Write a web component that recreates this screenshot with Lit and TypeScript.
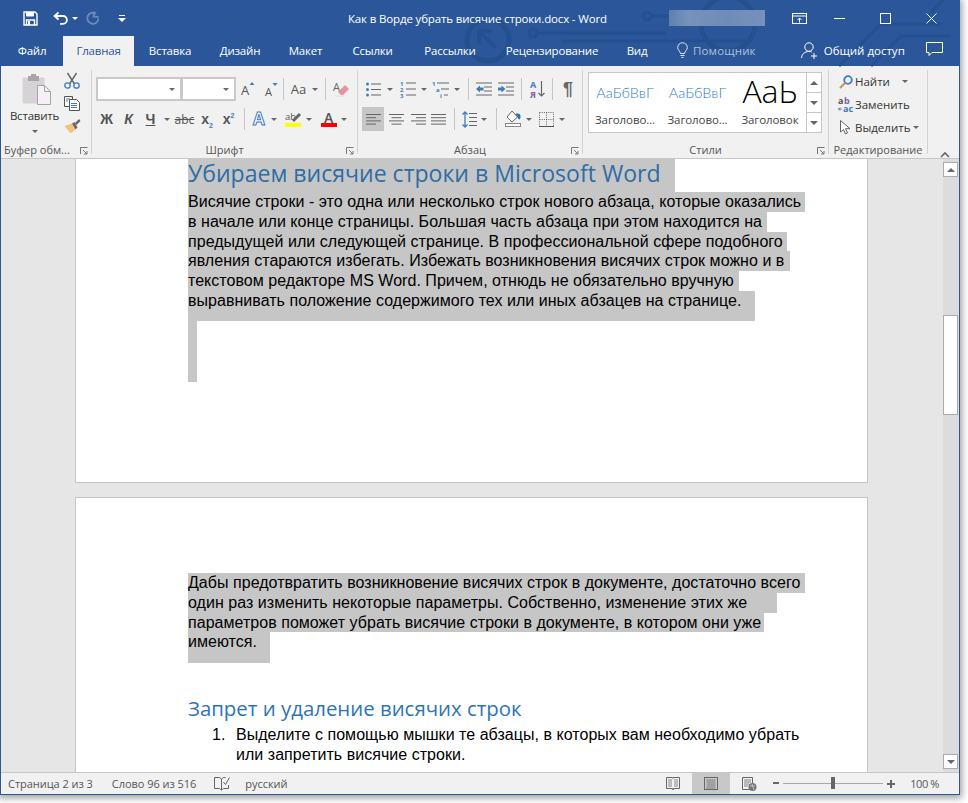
import { LitElement, html, css, svg } from "lit";
import { customElement } from "lit/decorators.js";

const cell = (w: number, t: unknown = "") => html`<span class="cell" style="width:${w}px">${t}</span>`;
const gap = (w: number) => html`<span class="cell" style="width:${w}px"></span>`;
const caret = html`<i class="caret"></i>`;
const sep = html`<i class="sep"></i>`;
const launcher = html`<svg class="launch" width="8" height="8" viewBox="0 0 8 8"><path d="M.5 7V.5H7.500M3 3l4 4M7 4v3H4" fill="none" stroke="#777"/></svg>`;
const ic = (w: number, h: number, body: unknown) =>
  html`<svg width="${w}" height="${h}" viewBox="0 0 ${w} ${h}" fill="none">${body}</svg>`;

const B = "#3f7cbf";

const icons = {
  save: ic(15, 15, svg`<path d="M1 1h11l2 2v11H1z" stroke="#fff" stroke-width="1.4"/><path d="M3.500 1v4h7V1" fill="#fff" stroke="#fff"/><path d="M3.500 14V9h8v5" stroke="#fff" stroke-width="1.400"/><rect x="5" y="10" width="2" height="4" fill="#fff"/>`),
  undo: ic(16, 14, svg`<path d="M5.500 1.500L1.500 5l4 3.500" stroke="#fff" stroke-width="1.800"/><path d="M2 5h8a3.800 3.800 0 0 1 0 7.800H7" stroke="#fff" stroke-width="1.800"/>`),
  redo: ic(14, 14, svg`<path d="M8 .5v5h5" stroke="#6d8cba" stroke-width="1.800" transform="rotate(8 8 3)"/><path d="M10 2.500a5.600 5.600 0 1 0 2.500 5" stroke="#6d8cba" stroke-width="1.800"/>`),
  qat: ic(8, 7, svg`<path d="M1 .5h6" stroke="#fff"/><path d="M0 3h8L4 7z" fill="#fff"/>`),
  display: ic(15, 11, svg`<rect x=".5" y=".5" width="14" height="10" stroke="#fff"/><path d="M.5 3h14" stroke="#fff"/><path d="M7.500 9.500V5M5.500 7l2-2 2 2" stroke="#fff"/>`),
  min: ic(11, 11, svg`<path d="M0 5.500h11" stroke="#fff"/>`),
  max: ic(11, 11, svg`<rect x=".5" y=".5" width="10" height="10" stroke="#fff"/>`),
  close: ic(11, 11, svg`<path d="M.5.500l10 10M10.500.500l-10 10" stroke="#fff"/>`),
  bulb: ic(11, 15, svg`<path d="M3.500 10.500C3 8 .7 7 .7 4.500a4.800 4.800 0 0 1 9.600 0c0 2.500-2.300 3.500-2.800 6z" stroke="#dfe6f0"/><path d="M3.500 12.500h4M4.500 14.500h2" stroke="#dfe6f0"/>`),
  user: ic(17, 17, svg`<circle cx="8" cy="5" r="4.200" stroke="#fff"/><path d="M.5 16c.5-4 3-6.500 7.500-6.500 1 0 2 .2 2.800.5" stroke="#fff"/><path d="M13 11v6M10 14h6" stroke="#fff"/>`),
  comment: ic(17, 15, svg`<path d="M.5.500h16v10H6l-3 3v-3H.5z" stroke="#fff"/>`),
  paste: ic(29, 31, svg`<path d="M1 4h21v25H1z" fill="#d6d3d6" stroke="#d6d3d6"/><rect x="6" y="2" width="11" height="5" fill="#a9a6a9"/><rect x="9" y="0" width="5" height="4" fill="#a9a6a9"/><path d="M15.500 11.500h7l6 6v13h-13z" fill="#f4f0f6" stroke="#a5a3a5"/><path d="M22.500 11.500v6h6" stroke="#a5a3a5"/>`),
  scissors: ic(16, 17, svg`<path d="M3.500 1l7 11M12.500 1l-7 11" stroke="#6b6b6b" stroke-width="1.500"/><circle cx="3.500" cy="13.500" r="2.700" stroke="${B}" stroke-width="1.300"/><circle cx="12.500" cy="13.500" r="2.700" stroke="${B}" stroke-width="1.300"/>`),
  copy: ic(16, 15, svg`<path d="M.5.500h8v10h-8z" fill="#fff" stroke="#555"/><path d="M5.500 3.500h7l3 3v8h-10z" fill="#fff" stroke="#555"/><path d="M7 7.500h6M7 9.500h6M7 11.500h6" stroke="${B}"/><path d="M2 3h4M2 5h2" stroke="${B}"/>`),
  brush: ic(17, 16, svg`<path d="M.5 8l6 7.500 5-4-3.500-6z" fill="#efc27e"/><path d="M8 5.500l3.500 6 2-2-3-5.500z" fill="#666"/><path d="M11 5l4-4 1.500 2-4 4z" fill="#666"/>`),
  grow: ic(14, 14, svg`<text x="0" y="13" font-family="Open Sans" font-size="13" fill="#555">A</text><path d="M8.500 3L11 0l2.500 3z" fill="${B}"/>`),
  shrink: ic(13, 13, svg`<text x="0" y="12.500" font-family="Open Sans" font-size="11" fill="#555">A</text><path d="M7.500 0h5L10 3z" fill="${B}"/>`),
  eraser: ic(16, 16, svg`<text x="0" y="10" font-family="Open Sans" font-size="11" fill="#666">A</text><path d="M5 11l7-7 4 4-6 6H8z" fill="#ec8f9c"/><path d="M2 15h9" stroke="#ddd"/>`),
  effect: ic(15, 16, svg`<text x="0" y="14" font-family="Open Sans" font-weight="700" font-size="17" fill="#fff" stroke="${B}" stroke-width="1">A</text>`),
  hilite: ic(16, 16, svg`<text x="0" y="9" font-family="Open Sans" font-size="9.500" fill="#555">ab</text><path d="M8 10l7-7" stroke="#666" stroke-width="3"/><rect y="12" width="16" height="4" fill="#ff0"/>`),
  color: ic(16, 16, svg`<text x="3" y="12" font-family="Open Sans" font-weight="600" font-size="14" fill="#555">A</text><rect y="12" width="16" height="4" fill="#f00"/>`),
  bullets: ic(15, 15, svg`<path d="M5 2h10M5 7.500h10M5 13h10" stroke="#666"/><circle cx="1.500" cy="2" r="1.500" fill="${B}"/><circle cx="1.500" cy="7.500" r="1.500" fill="${B}"/><circle cx="1.500" cy="13" r="1.500" fill="${B}"/>`),
  numbers: ic(16, 16, svg`<path d="M6 2h10M6 8h10M6 14h10" stroke="#666"/><text x="0" y="5" font-family="Open Sans" font-weight="700" font-size="6" fill="${B}">1</text><text x="0" y="11" font-family="Open Sans" font-weight="700" font-size="6" fill="${B}">2</text><text x="0" y="16.500" font-family="Open Sans" font-weight="700" font-size="6" fill="${B}">3</text>`),
  multi: ic(17, 16, svg`<path d="M5 2h12M9 8h8M12 14h4" stroke="#666"/><text x="0" y="5" font-family="Open Sans" font-weight="700" font-size="6" fill="${B}">1</text><text x="4" y="11" font-family="Open Sans" font-weight="700" font-size="6" fill="${B}">a</text><text x="8" y="16.500" font-family="Open Sans" font-weight="700" font-size="6" fill="${B}">i</text>`),
  outdent: ic(16, 14, svg`<path d="M0 1h16M8 5h8M8 9h8M0 13h16" stroke="#666"/><path d="M0 7l4-3.500V5.500h3.500v3H4v2z" fill="${B}"/>`),
  indent: ic(16, 14, svg`<path d="M0 1h16M8 5h8M8 9h8M0 13h16" stroke="#666"/><path d="M7.500 7L3.500 3.500V5.500H0v3h3.500v2z" fill="${B}"/>`),
  sort: ic(15, 18, svg`<text x="0" y="8" font-family="Open Sans" font-weight="700" font-size="9" fill="${B}">А</text><text x="0" y="17.500" font-family="Open Sans" font-weight="700" font-size="9" fill="#8a5aa8">Я</text><path d="M11.500 1v15M8.500 13l3 3 3-3" stroke="#666" stroke-width="1.200"/>`),
  left: ic(15, 11, svg`<path d="M0 .5h15M0 3.700h10M0 6.900h15M0 10.100h10" stroke="#666"/>`),
  center: ic(15, 11, svg`<path d="M0 .5h15M2.500 3.700h10M0 6.900h15M2.500 10.100h10" stroke="#666"/>`),
  right: ic(15, 11, svg`<path d="M0 .5h15M5 3.700h10M0 6.900h15M5 10.100h10" stroke="#666"/>`),
  justify: ic(15, 11, svg`<path d="M0 .5h15M0 3.700h15M0 6.900h15M0 10.100h15" stroke="#666"/>`),
  spacing: ic(15, 17, svg`<path d="M7 3h8M7 7h8M7 11h8M7 15h8" stroke="#666" transform="translate(0 -.5)"/><path d="M3 1v15M.5 3.500L3 1l2.500 2.500M.5 13.500L3 16l2.500-2.500" stroke="${B}" stroke-width="1.300"/>`),
  shade: ic(17, 18, svg`<path d="M2 7l5-6 5.500 6-5.500 5z" fill="#fff" stroke="#666"/><path d="M10.500 4c3-1 5 0 5 2.500S14.500 10 13.500 9z" fill="#2f6ead"/><rect x=".5" y="13.500" width="15" height="3" fill="#fff" stroke="#888"/>`),
  borders: ic(15, 15, svg`<path d="M.5.500h14v14M.5.500v14M.5 7.500h14M7.500.500v14" stroke="#555" stroke-width=".9" stroke-dasharray="1 1.200"/><path d="M0 14.500h15" stroke="#555"/>`),
  find: ic(14, 14, svg`<circle cx="9" cy="5" r="3.800" stroke="${B}" stroke-width="1.800"/><path d="M6 8l-5 5" stroke="#c69b4a" stroke-width="2.200"/>`),
  replace: ic(16, 17, svg`<text x="0" y="8" font-family="Open Sans" font-weight="700" font-size="9" fill="#555">a</text><text x="6" y="8" font-family="Open Sans" font-weight="700" font-size="9" fill="#8a5aa8">b</text><text x="5" y="16" font-family="Open Sans" font-weight="700" font-size="9" fill="#3b7cbb">ac</text><path d="M4 13H.5M2 11.500L.5 13 2 14.500" stroke="${B}"/>`),
  select: ic(11, 15, svg`<path d="M.5.500v11.500l3-2.500 2 4.500 2-1-2-4.300H10z" fill="#fff" stroke="#666"/>`),
  chevron: ic(10, 6, svg`<path d="M1 5l4-4 4 4" stroke="#666" stroke-width="1.600"/>`),
  proof: ic(16, 13, svg`<path d="M.5.500h5l2 1.500v11l-2-1.500h-5zM7.500 2l2-1.500h2M7.500 13l2-1.500h5V8" stroke="#666"/><path d="M9.500 5l2 2.500L15.500.5" stroke="#666"/>`),
  read: ic(14, 15, svg`<path d="M.5 1.500h6l.5 1 .5-1h6v11h-6l-.5 1.500-.5-1.500h-6z" stroke="#666"/><path d="M2 4h4M2 6h4M2 8h4M2 10h4M8 4h4M8 6h4M8 8h4M8 10h4" stroke="#888"/>`),
  print: ic(14, 13, svg`<rect x=".5" y=".5" width="13" height="12" stroke="#666"/><path d="M2.500 3h9M2.500 5h9M2.500 7h9M2.500 9h9M2.500 11h9" stroke="#666" stroke-width=".800"/>`),
  web: ic(15, 14, svg`<path d="M.5.500h10v12H.5z" stroke="#666"/><path d="M2 3h7M2 5h7M2 7h5M2 9h4" stroke="#666" stroke-width=".800"/><circle cx="10.500" cy="10" r="4" fill="#777"/><path d="M8 9h5M10 7l2 6" stroke="#ddd" stroke-width=".700"/>`),
};

const tabs: [string, number][] = [["Файл",62],["Главная",71],["Вставка",72],["Дизайн",68],["Макет",63],["Ссылки",71],["Рассылки",84],["Рецензирование",120],["Вид",50]];

const p1: [string, number][] = [
  ["Висячие строки - это одна или несколько строк нового абзаца, которые оказались",617],
  ["в начале или конце страницы. Большая часть абзаца при этом находится на",579],
  ["предыдущей или следующей странице. В профессиональной сфере подобного",599],
  ["явления стараются избегать. Избежать возникновения висячих строк можно и в",602],
  ["текстовом редакторе MS Word. Причем, отнюдь не обязательно вручную",551],
  ["выравнивать положение содержимого тех или иных абзацев на странице.",567],
];
const p2: [string, number][] = [
  ["Дабы предотвратить возникновение висячих строк в документе, достаточно всего",617],
  ["один раз изменить некоторые параметры. Собственно, изменение этих же",589],
  ["параметров поможет убрать висячие строки в документе, в котором они уже",576],
  ["имеются.",82],
];
const line = ([t, w]: [string, number], last = false) =>
  html`<div class="ln ${last ? "last" : ""}" style="width:${w}px">${t}</div>`;

@customElement("app-root")
export class AppRoot extends LitElement {
  static styles = css`
    :host { display: block; width: 968px; height: 803px; background: #fff; overflow: hidden; }
    * { box-sizing: border-box; }
    svg { overflow: visible; flex: none; }
    .win { width: 960px; height: 795px; border: 1px solid #2b579a; border-top: 0; display: flex; flex-direction: column; box-shadow: 0 1px 7px 2px rgba(0,0,0,.38); font-family: "Open Sans", sans-serif; font-size: 11px; color: #444; background: #f1f1f1; }
    .head { position: relative; background: #2b579a; height: 66px; flex: none; color: #fff; }
    .deco { position: absolute; left: 0; top: 0; pointer-events: none; }
    .titlebar { position: relative; height: 36px; display: flex; align-items: center; }
    .qat { width: 347px; padding-left: 21px; display: flex; align-items: center; flex: none; }
    .title { width: 321px; font-size: 11.500px; flex: none; letter-spacing: -.15px; white-space: nowrap; }
    .blur { width: 96px; height: 16px; flex: none; background: linear-gradient(90deg,#5f80b0,#7792bb 20%,#6f8cb8 60%,#7691bb); }
    .cell { display: inline-flex; align-items: center; justify-content: center; height: 100%; flex: none; }
    .winbtns { display: flex; margin-left: 21px; height: 100%; align-items: center; }
    .tabs { position: relative; height: 30px; display: flex; align-items: stretch; font-size: 11.500px; }
    .tab { display: flex; align-items: center; justify-content: center; flex: none; letter-spacing: -.2px; padding-bottom: 2px; }
    .tab.on { background: #f1f1f1; color: #2b579a; }
    .help { display: flex; align-items: center; gap: 5px; margin-left: 15px; color: #afc0da; padding-bottom: 2px; letter-spacing: .15px; }
    .share { display: flex; align-items: center; gap: 6px; margin-left: 45px; padding-bottom: 2px; }
    .cmt { display: flex; align-items: center; margin-left: 21px; padding-bottom: 4px; }
    .ribbon { height: 93px; flex: none; display: flex; border-bottom: 1px solid #c6c6c6; padding-top: 4px; position: relative; }
    .grp { flex: none; display: flex; flex-direction: column; border-right: 1px solid #d2d2d2; height: 84px; position: relative; }
    .body { flex: 1; min-height: 0; display: flex; }
    .stack { display: flex; flex-direction: column; padding-top: 7px; gap: 6px; }
    .row { display: flex; align-items: center; height: 24px; }
    .glabel { height: 17px; line-height: 15px; margin-bottom: -5px; text-align: center; color: #555; white-space: nowrap; flex: none; font-size: 11px; }
    .glabel.first { text-align: left; padding-left: 3px; }
    .launch { position: absolute; right: 3px; bottom: -1px; }
    .caret { display: inline-block; width: 0; height: 0; border: 3px solid transparent; border-top: 3.500px solid #666; border-bottom: 0; flex: none; }
    .caret.white { border-top-color: #fff; }
    .sep { display: inline-block; width: 1px; height: 22px; background: #c6c6c6; flex: none; }
    .paste { width: 56px; display: flex; flex-direction: column; align-items: center; padding: 4px 0 0 11px; color: #333; }
    .paste svg { margin-left: 4px; }
    .paste span { margin-top: 3px; font-size: 11.500px; letter-spacing: -.2px; white-space: nowrap; }
    .paste .caret { margin-top: 7px; }
    .small { display: flex; flex-direction: column; align-items: center; width: 30px; gap: 7px; padding-top: 2px; }
    .combo { height: 24px; background: #fff; border: 2px solid #c9c9c9; display: flex; align-items: center; justify-content: flex-end; padding-right: 5px; flex: none; }
    .b { font-weight: 700; font-size: 14px; color: #555; font-family: "Liberation Sans", sans-serif; }
    .i { font-style: italic; }
    .u { text-decoration: underline; }
    .s { text-decoration: line-through; font-size: 12px; font-family: "Open Sans", sans-serif; font-weight: 400; }
    .b sub, .b sup { font-size: 7px; color: #3f7cbf; line-height: 0; }
    .aa { font-size: 13px; color: #555; margin-right: 6px; }
    .act { background: #c6c6c6; height: 24px; }
    .gallery { margin: 2px 0 0 5px; width: 234px; height: 61px; background: #fff; border: 1px solid #c6c6c6; display: flex; flex: none; }
    .style { display: flex; flex-direction: column; align-items: center; flex: none; color: #444; }
    .st-a { height: 35px; line-height: 39px; color: #2e80c8; font-family: "Lato", "Open Sans", sans-serif; font-weight: 300; font-size: 14.500px; white-space: nowrap; }
    .st-b { height: 35px; line-height: 36px; color: #000; font-family: "Open Sans", sans-serif; font-weight: 300; font-size: 32px; white-space: nowrap; }
    .st-l { margin-top: 4px; font-size: 11.500px; white-space: nowrap; letter-spacing: -.1px; }
    .spin { margin-left: auto; width: 15px; display: flex; flex-direction: column; border-left: 1px solid #c6c6c6; }
    .spin b { flex: 1; display: flex; align-items: center; justify-content: center; border-bottom: 1px solid #c6c6c6; background: #fff; }
    .spin b:last-child { border-bottom: 0; }
    .edit { display: flex; flex-direction: column; padding: 0 0 0 7px; color: #333; font-size: 11.500px; }
    .edit div { height: 23px; flex: none; display: flex; align-items: center; white-space: nowrap; }
    .edit .ei { width: 19px; display: flex; justify-content: center; flex: none; }
    .chev { position: absolute; left: 939px; top: 80px; }
    .doc { flex: 1; min-height: 0; display: flex; overflow: hidden; }
    .canvas { flex: 1; min-width: 0; background: #e6e6e6; padding-left: 74px; overflow: hidden; font-family: "Liberation Sans", sans-serif; font-size: 16px; letter-spacing: .035px; color: #000; }
    .page { width: 793px; background: #fff; border: 1px solid #c6c6c6; padding-left: 112px; }
    .p1 { height: 324px; border-top: 0; }
    .p2 { margin-top: 14px; padding-top: 75px; height: 400px; }
    .h1 { width: 487px; height: 33px; line-height: 29px; background: #c6c6c6; color: #2e6da6; font-family: "Open Sans", sans-serif; font-weight: 400; font-size: 23.050px; letter-spacing: 0; white-space: nowrap; }
    .ln { background: #c6c6c6; height: 19.750px; line-height: 19.750px; white-space: nowrap; }
    .ln.last { height: 30.500px; }
    .gap { background: #c6c6c6; width: 9px; height: 61px; }
    .h2 { margin-top: 32px; height: 30px; line-height: 26px; color: #2e74b5; font-family: "Open Sans", sans-serif; font-weight: 400; font-size: 20.400px; letter-spacing: 0; white-space: nowrap; }
    .li { display: flex; padding-left: 24px; line-height: 19.750px; white-space: nowrap; }
    .li span { width: 24px; flex: none; }
    .sb { width: 16px; flex: none; background: #dcdcdc; display: flex; flex-direction: column; padding: 3px 1px 3px 0; }
    .sbtn { height: 15px; background: #fff; border: 1px solid #ababab; display: flex; align-items: center; justify-content: center; flex: none; }
    .up { width: 0; height: 0; border: 4px solid transparent; border-bottom: 4px solid #666; border-top: 0; }
    .dn { width: 0; height: 0; border: 4px solid transparent; border-top: 4px solid #666; border-bottom: 0; }
    .thumb { height: 100px; margin-top: 138px; margin-bottom: auto; background: #fff; border: 1px solid #ababab; flex: none; }
    .status { height: 22px; flex: none; border-top: 1px solid #c6c6c6; background: #f1f1f1; display: flex; align-items: center; font-size: 11px; letter-spacing: -.04px; color: #555; white-space: nowrap; }
    .status .txt { flex: none; }
    .status .zoom { letter-spacing: -.4px; margin: 0 20px 0 15px; }
    .view { height: 100%; display: flex; align-items: center; justify-content: center; flex: none; }
    .view.on { background: #c8c8c8; }
    .slider { position: relative; width: 100px; height: 1px; background: #a8a8a8; margin: 0 4px; flex: none; }
    .knob { position: absolute; left: 48px; top: -6px; width: 4px; height: 12px; background: #666; }
  `;

  render() {
    return html`<div class="win">
      <div class="head">
        <svg class="deco" width="958" height="66" viewBox="0 0 958 66" fill="none" stroke="#25508f" stroke-width="3">
          <circle cx="487" cy="40" r="21" stroke-width="5"/>
          <path d="M495 48l-16-16M478 44V31h13" stroke-width="4"/>
          <circle cx="532" cy="33" r="4"/><path d="M536 33h130M560 41h190"/>
          <circle cx="646" cy="16" r="4"/><path d="M650 16h20"/>
          <circle cx="727" cy="24" r="27" stroke-width="5"/>
          <path d="M838 66l42-42h60M870 66l30-30h50M930 12l22-22"/>
        </svg>
        <div class="titlebar">
          <div class="qat">
            ${cell(17, icons.save)}${gap(13)}${cell(17, icons.undo)}${cell(12, html`<i class="caret white"></i>`)}
            ${gap(5)}${cell(14, icons.redo)}${gap(17)}${cell(10, icons.qat)}
          </div>
          <div class="title">Как в Ворде убрать висячие строки.docx - Word</div>
          <div class="blur"></div>
          <div class="winbtns">${cell(27, icons.display)}${gap(21)}${cell(11, icons.min)}${gap(35)}${cell(11, icons.max)}${gap(35)}${cell(11, icons.close)}</div>
        </div>
        <div class="tabs">
          ${tabs.map(([t, w], i) => html`<div class="tab ${i === 1 ? "on" : ""}" style="width:${w}px">${t}</div>`)}
          <div class="help">${icons.bulb}<span>Помощник</span></div>
          <div class="share">${icons.user}<span>Общий доступ</span></div>
          <div class="cmt">${icons.comment}</div>
        </div>
      </div>

      <div class="ribbon">
        <div class="grp" style="width:91px">
          <div class="body">
            <div class="paste">${icons.paste}<span>Вставить</span>${caret}</div>
            <div class="small">${icons.scissors}${icons.copy}${icons.brush}</div>
          </div>
          <div class="glabel first">Буфер обм...</div>${launcher}
        </div>

        <div class="grp" style="width:266px">
          <div class="body"><div class="stack" style="padding-left:4px">
            <div class="row">
              <div class="combo" style="width:86px">${caret}</div>
              <div class="combo" style="width:55px;margin-left:-1px">${caret}</div>
              ${cell(24, icons.grow)}${cell(23, icons.shrink)}${sep}
              ${cell(41, html`<span class="aa">Aa</span>${caret}`)}${sep}${cell(30, icons.eraser)}
            </div>
            <div class="row">
              ${cell(21, html`<span class="b">Ж</span>`)}${cell(23, html`<span class="b i">К</span>`)}${cell(21, html`<span class="b u">Ч</span>`)}${cell(11, caret)}
              ${cell(25, html`<span class="b s">abc</span>`)}${cell(20, html`<span class="b">x<sub>2</sub></span>`)}${cell(23, html`<span class="b">x<sup>2</sup></span>`)}
              ${gap(4)}${sep}${gap(4)}
              ${cell(22, icons.effect)}${cell(6, caret)}${gap(6)}${cell(20, icons.hilite)}${cell(12, caret)}${gap(4)}${cell(20, icons.color)}${cell(10, caret)}
            </div>
          </div></div>
          <div class="glabel">Шрифт</div>${launcher}
        </div>

        <div class="grp" style="width:225px">
          <div class="body"><div class="stack" style="padding-left:3px">
            <div class="row">
              ${cell(24, icons.bullets)}${cell(9, caret)}${gap(1)}${cell(25, icons.numbers)}${cell(8, caret)}${cell(24, icons.multi)}${cell(10, caret)}${gap(6)}${sep}
              ${cell(29, icons.outdent)}${cell(16, icons.indent)}${gap(7)}${sep}${cell(30, icons.sort)}${sep}${cell(30, html`<span class="b" style="font-size:18px;color:#666">¶</span>`)}
            </div>
            <div class="row">
              ${gap(1)}<span class="cell act" style="width:22px">${icons.left}</span>${cell(24, icons.center)}${cell(20, icons.right)}${cell(21, icons.justify)}${gap(5)}${sep}${gap(7)}
              ${cell(15, icons.spacing)}${cell(14, caret)}${gap(5)}${sep}${gap(8)}${cell(17, icons.shade)}${cell(14, caret)}${gap(3)}${cell(15, icons.borders)}${cell(16, caret)}
            </div>
          </div></div>
          <div class="glabel">Абзац</div>${launcher}
        </div>

        <div class="grp" style="width:246px">
          <div class="body">
            <div class="gallery">
              <div class="style" style="width:72px"><span class="st-a">АаБбВвГ</span><span class="st-l">Заголово...</span></div>
              <div class="style" style="width:73px"><span class="st-a">АаБбВвГ</span><span class="st-l">Заголово...</span></div>
              <div class="style" style="width:72px"><span class="st-b">АаЬ</span><span class="st-l">Заголовок</span></div>
              <div class="spin"><b><i class="up"></i></b><b><i class="dn"></i></b><b><i class="dn"></i></b></div>
            </div>
          </div>
          <div class="glabel">Стили</div>${launcher}
        </div>

        <div class="grp" style="width:99px">
          <div class="body"><div class="edit">
            <div><span class="ei">${icons.find}</span>Найти<i class="caret" style="margin-left:12px"></i></div>
            <div><span class="ei">${icons.replace}</span>Заменить</div>
            <div><span class="ei">${icons.select}</span>Выделить<i class="caret" style="margin-left:3px"></i></div>
          </div></div>
          <div class="glabel">Редактирование</div>
        </div>
        <div class="chev">${icons.chevron}</div>
      </div>

      <div class="doc">
        <div class="canvas">
          <div class="page p1">
            <div class="h1">Убираем висячие строки в Microsoft Word</div>
            ${p1.map((l, i) => line(l, i === 5))}
            <div class="gap"></div>
          </div>
          <div class="page p2">
            ${p2.map((l, i) => line(l, i === 3))}
            <div class="h2">Запрет и удаление висячих строк</div>
            <div class="li"><span>1.</span><div>Выделите с помощью мышки те абзацы, в которых вам необходимо убрать<br />или запретить висячие строки.</div></div>
          </div>
        </div>
        <div class="sb">
          <div class="sbtn"><i class="up"></i></div>
          <div class="thumb"></div>
          <div class="sbtn"><i class="dn"></i></div>
        </div>
      </div>

      <div class="status">
        <span class="txt" style="margin-left:7px">Страница 2 из 3</span>
        <span class="txt" style="margin-left:19px">Слово 96 из 516</span>
        ${gap(18)}${icons.proof}
        <span class="txt" style="margin-left:15px">русский</span>
        <span style="flex:1"></span>
        <span class="view" style="width:14px">${icons.read}</span>
        ${gap(12)}
        <span class="view on" style="width:38px">${icons.print}</span>
        ${gap(12)}
        <span class="view" style="width:15px">${icons.web}</span>
        ${gap(16)}
        <svg width="6" height="3" viewBox="0 0 6 3"><rect width="6" height="2" fill="#666"/></svg>
        <div class="slider"><i class="knob"></i></div>
        <svg width="8" height="8" viewBox="0 0 8 8"><path d="M0 4h8M4 0v8" stroke="#666" stroke-width="2"/></svg>
        <span class="txt zoom">100 %</span>
      </div>
    </div>`;
  }
}
